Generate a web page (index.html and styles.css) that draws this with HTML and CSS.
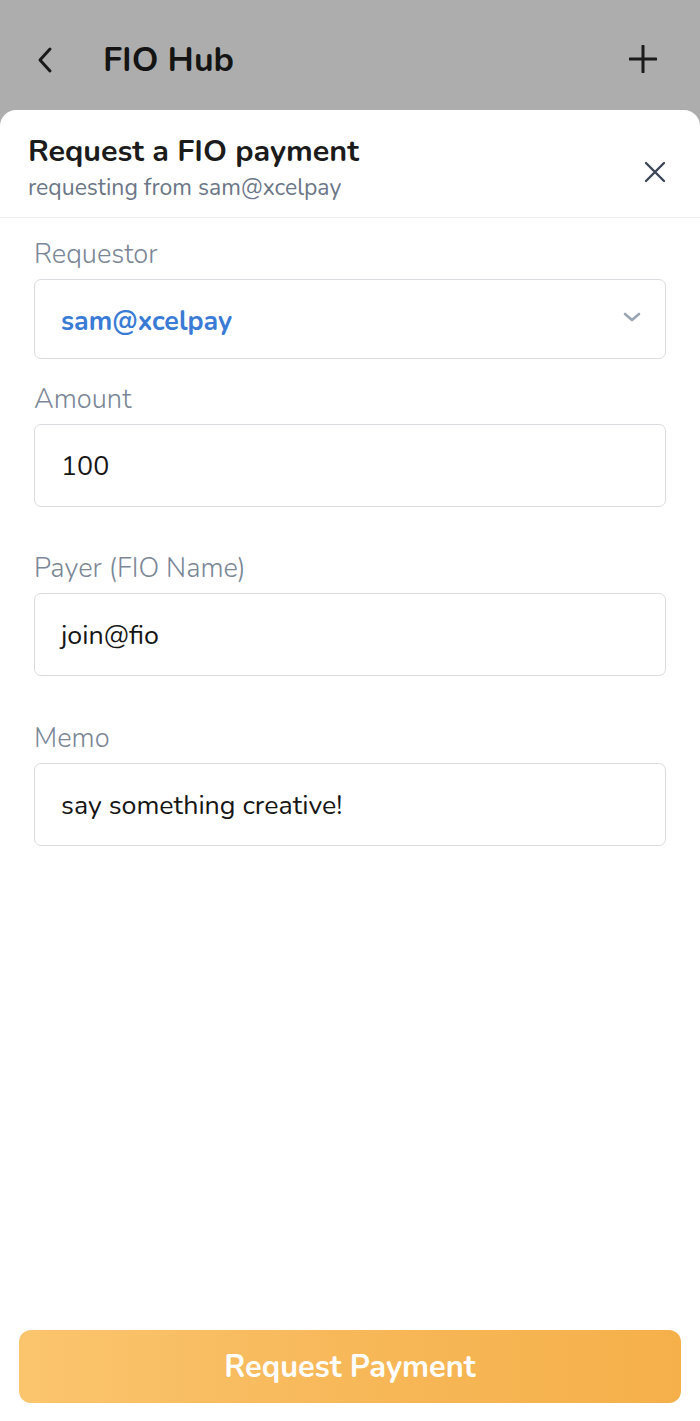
FILE: index.html
```html
<!DOCTYPE html>
<html lang="en">
<head>
<meta charset="utf-8">
<title>FIO Hub</title>
<link rel="stylesheet" href="styles.css">
</head>
<body>
<div class="screen">
  <header class="topbar">
    <div class="topbar-left">
      <svg class="icon-back" width="20" height="28" viewBox="0 0 20 28"><path d="M14 3 L4 14 L14 25" fill="none" stroke="#1a1a1a" stroke-width="3" stroke-linecap="round" stroke-linejoin="round"/></svg>
      <h1 class="topbar-title">FIO Hub</h1>
    </div>
    <svg class="icon-plus" width="28" height="28" viewBox="0 0 28 28"><path d="M14 1 V27 M1 14 H27" stroke="#1a1a1a" stroke-width="3" stroke-linecap="round"/></svg>
  </header>

  <section class="sheet">
    <div class="sheet-header">
      <div class="sheet-titles">
        <h2 class="sheet-title">Request a FIO payment</h2>
        <p class="sheet-subtitle">requesting from sam@xcelpay</p>
      </div>
      <svg class="icon-close" width="22" height="22" viewBox="0 0 22 22"><path d="M2 2 L20 20 M20 2 L2 20" stroke="#3c4656" stroke-width="2.4" stroke-linecap="round"/></svg>
    </div>

    <form class="form">
      <div class="field">
        <label class="field-label">Requestor</label>
        <div class="box select-box">
          <span class="select-value">sam@xcelpay</span>
          <svg class="icon-chevron" width="18" height="10" viewBox="0 0 18 10"><path d="M2 2 L9 8 L16 2" fill="none" stroke="#9aa5b1" stroke-width="2.6" stroke-linecap="round" stroke-linejoin="round"/></svg>
        </div>
      </div>
      <div class="field field-amount">
        <label class="field-label">Amount</label>
        <div class="box input-box">100</div>
      </div>
      <div class="field field-payer">
        <label class="field-label">Payer (FIO Name)</label>
        <div class="box input-box">join@fio</div>
      </div>
      <div class="field field-memo">
        <label class="field-label">Memo</label>
        <div class="box input-box">say something creative!</div>
      </div>
    </form>

    <button class="submit" type="button">Request Payment</button>
  </section>
</div>
</body>
</html>
```

FILE: styles.css
```css
* { box-sizing: border-box; }
html, body { margin: 0; padding: 0; }
body {
  width: 700px;
  height: 1421px;
  background: #adadad;
  font-family: "Nunito", "Lato", "Noto Sans", sans-serif;
  color: #1a1a1a;
  overflow: hidden;
}
.screen {
  height: 1421px;
  display: flex;
  flex-direction: column;
}
.topbar {
  height: 110px;
  flex: none;
  display: flex;
  align-items: center;
  justify-content: space-between;
  padding: 10px 43px 0 36px;
}
.topbar-left {
  display: flex;
  align-items: center;
  gap: 47px;
}
.icon-back { display: block; margin-top: -1px; }
.topbar-title {
  margin: 0;
  font-size: 34px;
  font-weight: 700;
  color: #141414;
}
.icon-plus { display: block; margin-top: -2px; }

.sheet {
  flex: 1;
  background: #fff;
  border-radius: 16px 16px 0 0;
  display: flex;
  flex-direction: column;
}
.sheet-header {
  display: flex;
  align-items: center;
  justify-content: space-between;
  padding: 22px 34px 15px 28px;
  border-bottom: 1px solid #efefef;
}
.sheet-title {
  margin: 0;
  font-size: 30.5px;
  line-height: 38px;
  font-weight: 700;
  color: #1b1b1b;
}
.sheet-subtitle {
  margin: 4px 0 0;
  font-size: 23px;
  line-height: 28px;
  color: #6b7687;
}
.icon-close { display: block; margin-top: 10px; }

.form {
  padding: 20px 34px 0;
  display: flex;
  flex-direction: column;
}
.field { display: flex; flex-direction: column; }
.field-amount { margin-top: 24px; }
.field-payer { margin-top: 45px; }
.field-memo { margin-top: 46px; }
.field-label {
  font-size: 27.3px;
  line-height: 32px;
  font-weight: 300;
  color: #7b8797;
  margin-bottom: 9px;
}
.box {
  border: 1.5px solid #d9dbde;
  border-radius: 7px;
  display: flex;
  align-items: center;
  padding: 0 26px;
  font-size: 26.8px;
  color: #161616;
}
.select-box {
  height: 80px;
  justify-content: space-between;
  padding-right: 24px;
}
.select-value {
  color: #3a7bd5;
  font-weight: 700;
  margin-top: 4px;
}
.icon-chevron { display: block; margin-top: -4px; }
.input-box { height: 83px; }

.submit {
  margin: auto 19px 18px;
  height: 73px;
  border: none;
  border-radius: 12px;
  background: linear-gradient(90deg, #fbc56e 0%, #f7b859 50%, #f5b04a 100%);
  color: #fff;
  font-family: inherit;
  font-size: 30.8px;
  font-weight: 700;
  padding: 0;
}
```
